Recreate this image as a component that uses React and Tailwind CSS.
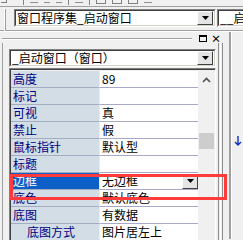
import React from "react";

const FONT = { fontFamily: '"Noto Sans CJK SC", "Liberation Sans", sans-serif' };

const ROWS = [
  { label: "高度", value: "89" },
  { label: "标记", value: "" },
  { label: "可视", value: "真" },
  { label: "禁止", value: "假" },
  { label: "鼠标指针", value: "默认型" },
  { label: "标题", value: "" },
  { label: "边框", value: "无边框", selected: true },
  { label: "底色", value: "默认底色" },
  { label: "底图", value: "有数据" },
  { label: "底图方式", value: "图片居左上", indent: true },
];

function DropButton({ className = "" }) {
  return (
    <div
      className={`shrink-0 flex items-center justify-center bg-[#e4e4e4] border border-t-white border-l-white border-b-[#404040] border-r-[#404040] ${className}`}
    >
      <svg width="7" height="4" viewBox="0 0 7 4">
        <path d="M0 0h7L3.5 4z" fill="#000" />
      </svg>
    </div>
  );
}

function Combo({ text, button = true, className = "" }) {
  return (
    <div className={`border border-t-[#808080] border-l-[#808080] border-b-white border-r-white ${className}`}>
      <div className="h-full flex items-center bg-white border border-t-[#404040] border-l-[#404040] border-b-[#d4d0c8] border-r-[#d4d0c8]">
        <span className="flex-1 pl-[1px] text-[12px] leading-[16px] text-black whitespace-nowrap">{text}</span>
        {button && <DropButton className="w-[16px] h-[14px] mr-[1px]" />}
      </div>
    </div>
  );
}

function Row({ label, value, selected, indent }) {
  return (
    <div className="flex h-[17px]">
      <div
        className={`w-[89px] shrink-0 border-b border-r border-b-[#a4acc4] border-r-[#e8ecf0] flex items-center text-[12px] leading-[16px] whitespace-nowrap ${
          selected ? "bg-[#0b5fc6] text-white" : "bg-[#d3dde6] text-[#000080]"
        } ${indent ? "pl-[16px]" : "pl-[2px]"}`}
      >
        {label}
      </div>
      <div className="flex-1 border-b border-b-[#a8a8c8] bg-white flex items-center pl-[2px] text-[12px] leading-[16px] text-black whitespace-nowrap">
        <span className="flex-1">{value}</span>
        {selected && <DropButton className="w-[16px] h-[15px] bg-[#c8c8c8]" />}
      </div>
    </div>
  );
}

export default function App() {
  return (
    <div style={FONT} className="relative w-[243px] h-[240px] overflow-hidden bg-[#f0f0f0]">
      {/* toolbar remnant */}
      <div className="h-[7px] flex items-start gap-[6px] pl-[1px] border-b border-b-[#a0a0a0]">
        <div className="w-[6px] h-[3px] border-b border-r border-[#808080]" />
        <div className="w-[1px] h-[5px] bg-[#808080] ml-[10px]" />
        <div className="w-[8px] h-[3px] border-b border-[#909090]" />
        <div className="w-[6px] h-[3px] border-b border-[#909090]" />
        <div className="w-[6px] h-[3px] border-b border-[#909090]" />
        <div className="w-[1px] h-[5px] bg-[#808080]" />
        <div className="w-[8px] h-[3px] border-b border-[#909090]" />
        <div className="w-[1px] h-[5px] bg-[#808080]" />
        <div className="w-[10px] h-[4px] border border-t-0 border-[#808080]" />
        <div className="w-[10px] h-[4px] border border-t-0 border-[#808080]" />
        <div className="w-[10px] h-[4px] border border-t-0 border-[#808080]" />
        <div className="w-[8px] h-[3px] border-b border-[#909090]" />
      </div>

      {/* code combos */}
      <div className="h-[24px] flex items-start pt-[2px] border-b border-b-[#a0a0a0]">
        <div className="w-[2px] h-[22px] ml-[4px] mr-[8px] border-l border-r border-l-white border-r-[#a0a0a0]" />
        <Combo text="窗口程序集_启动窗口" className="w-[202px] h-[18px] shrink-0" />
        <Combo text="__启" button={false} className="ml-[1px] w-[40px] h-[18px] shrink-0" />
      </div>

      {/* body */}
      <div className="flex h-[208px] border-t border-t-white">
        <div className="w-[231px] shrink-0 flex flex-col pl-[2px] border-r-2 border-r-[#a0a0a0]">
          {/* panel header */}
          <div className="h-[13px] mt-[2px] flex items-center pr-[8px]">
            <div className="w-[190px] h-[2px] border-t border-b border-t-[#a0a0a0] border-b-white mr-[6px]" />
            <div className="w-[10px] h-[9px] flex items-center justify-center mr-[3px]">
              <div className="w-[8px] h-[7px] border border-t-2 border-black" />
            </div>
            <div className="w-[10px] h-[9px] flex items-center justify-center text-[10px] leading-[9px] font-bold text-black">
              ×
            </div>
          </div>
          <div className="flex-1 flex border-l border-l-[#a0a0a0]">
            <div className="w-[207px] flex flex-col ml-[6px] pt-[6px]">
              <Combo text="_启动窗口（窗口）" className="h-[18px]" />
              <div className="flex-1 flex mt-[1px] border border-t-[#808080] border-l-[#808080] border-b-white border-r-white">
                <div className="flex-1 flex border border-t-[#404040] border-l-[#404040] border-r-0 border-b-0">
                  <div className="flex-1 flex flex-col pt-[1px]">
                    {ROWS.map((r) => (
                      <Row key={r.label} {...r} />
                    ))}
                  </div>
                  <div className="w-[17px] shrink-0 bg-[#f0f0f0] flex flex-col items-center">
                    <svg width="9" height="6" viewBox="0 0 9 6" className="mt-[7px]">
                      <path d="M1 5l3.5-3.5L8 5" stroke="#505050" strokeWidth="1.6" fill="none" />
                    </svg>
                    <div className="w-[15px] h-[16px] bg-[#cdcdcd] mt-[50px]" />
                  </div>
                </div>
              </div>
            </div>
            {/* panel inner edge lines */}
            <div className="flex-1 flex pl-[2px]">
              <div className="w-[1px] h-full bg-[#8c8c8c]" />
              <div className="w-[1px] h-full bg-white ml-[1px]" />
              <div className="w-[1px] h-full bg-[#8c8c8c] ml-[1px]" />
            </div>
          </div>
        </div>
        {/* right side */}
        <div className="flex-1 flex">
          <div className="w-[1px] h-full bg-white" />
          <div className="flex-1 flex flex-col items-end pt-[104px] pr-[1px]">
            <svg width="8" height="10" viewBox="0 0 8 10">
              <path d="M4 0v9M1 6l3 3 3-3" stroke="#1030c0" strokeWidth="1.4" fill="none" />
            </svg>
          </div>
        </div>
      </div>

      {/* annotation box */}
      <div className="absolute left-[10px] top-[174px] w-[217px] h-[26px] border-[3px] border-[#ff3b3b]" />
    </div>
  );
}
